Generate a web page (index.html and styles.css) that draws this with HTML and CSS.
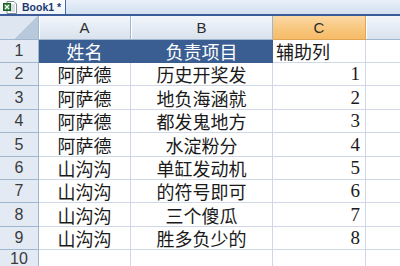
FILE: index.html
```html
<!DOCTYPE html>
<html lang="zh">
<head>
<meta charset="utf-8">
<link rel="stylesheet" href="styles.css">
</head>
<body>
<div class="tabbar">
  <div class="tab">
    <svg class="xl-icon" width="14" height="13" viewBox="0 0 14 13">
      <path d="M4 0.5h7l2.5 2.5v9.5h-9.5z" fill="#fff" stroke="#7f8c99"/>
      <path d="M6 4h6M6 6h6M6 8h6M6 10h6" stroke="#9fb0c2" stroke-width="0.8"/>
      <rect x="0.5" y="2.5" width="7" height="7" fill="#2f8a3a" stroke="#1f5f27"/>
      <path d="M2 4l4 4M6 4l-4 4" stroke="#fff" stroke-width="1.3"/>
    </svg>
    <span class="tab-title">Book1 *</span>
  </div>
</div>
<div class="sheet">
  <div class="corner"></div>
  <div class="colhead">A</div>
  <div class="colhead">B</div>
  <div class="colhead sel">C</div>
  <div class="colhead last"></div>

  <div class="rowhead">1</div>
  <div class="cell center title">姓名</div>
  <div class="cell center title">负责项目</div>
  <div class="cell left">辅助列</div>
  <div class="cell last"></div>

  <div class="rowhead">2</div>
  <div class="cell center">阿萨德</div>
  <div class="cell center">历史开奖发</div>
  <div class="cell num">1</div>
  <div class="cell last"></div>

  <div class="rowhead">3</div>
  <div class="cell center">阿萨德</div>
  <div class="cell center">地负海涵就</div>
  <div class="cell num">2</div>
  <div class="cell last"></div>

  <div class="rowhead">4</div>
  <div class="cell center">阿萨德</div>
  <div class="cell center">都发鬼地方</div>
  <div class="cell num">3</div>
  <div class="cell last"></div>

  <div class="rowhead">5</div>
  <div class="cell center">阿萨德</div>
  <div class="cell center">水淀粉分</div>
  <div class="cell num">4</div>
  <div class="cell last"></div>

  <div class="rowhead">6</div>
  <div class="cell center">山沟沟</div>
  <div class="cell center">单缸发动机</div>
  <div class="cell num">5</div>
  <div class="cell last"></div>

  <div class="rowhead">7</div>
  <div class="cell center">山沟沟</div>
  <div class="cell center">的符号即可</div>
  <div class="cell num">6</div>
  <div class="cell last"></div>

  <div class="rowhead">8</div>
  <div class="cell center">山沟沟</div>
  <div class="cell center">三个傻瓜</div>
  <div class="cell num">7</div>
  <div class="cell last"></div>

  <div class="rowhead">9</div>
  <div class="cell center">山沟沟</div>
  <div class="cell center">胜多负少的</div>
  <div class="cell num">8</div>
  <div class="cell last"></div>

  <div class="rowhead">10</div>
  <div class="cell"></div>
  <div class="cell"></div>
  <div class="cell"></div>
  <div class="cell last"></div>
</div>
</body>
</html>
```
FILE: styles.css
```css
html, body {
  margin: 0;
  padding: 0;
  width: 400px;
  height: 266px;
  overflow: hidden;
  background: #fff;
}

.tabbar {
  height: 14px;
  background: linear-gradient(#e9f0f9, #d3e0f0);
  border-bottom: 2px solid #3b5c99;
  display: flex;
  align-items: stretch;
}

.tab {
  width: 66px;
  box-sizing: border-box;
  background: linear-gradient(#ffffff, #eef3fa);
  border-right: 1px solid #4a6aa5;
  display: flex;
  align-items: center;
  gap: 5px;
  padding-left: 3px;
}

.xl-icon {
  flex: none;
}

.tab-title {
  font-family: "Liberation Sans", Arial, sans-serif;
  font-weight: bold;
  font-size: 10.5px;
  line-height: 12px;
  color: #1c3a70;
  white-space: pre;
}

.sheet {
  display: grid;
  grid-template-columns: 39px 92px 142px 93px 1fr;
  grid-template-rows: 24px 23px 23px 24px 23px 24px 23px 23px 24px 23px 1fr;
  height: 250px;
}

.corner {
  box-sizing: border-box;
  border-right: 1px solid #9eb6ce;
  border-bottom: 1px solid #9eb6ce;
  background-color: #dde6f1;
  background-image: linear-gradient(135deg, transparent 62%, #b9c9dc 62%);
}

.colhead {
  box-sizing: border-box;
  background: linear-gradient(#f3f6fb, #e4ebf4 55%, #d9e2ed);
  border-right: 1px solid #9eb6ce;
  border-bottom: 1px solid #9eb6ce;
  box-shadow: inset 1px 0 0 #ffffff;
  display: flex;
  align-items: center;
  justify-content: center;
  font-family: "Liberation Sans", Arial, sans-serif;
  font-size: 15px;
  line-height: 18px;
  color: #2d2d2d;
  padding-top: 1px;
}

.colhead.sel {
  background: linear-gradient(#fbd9a6, #f8c77d 55%, #f6bb68);
  border-right: 1px solid #e0a552;
  border-bottom: 1px solid #e0a552;
  box-shadow: none;
}

.colhead.last {
  border-right: none;
}

.rowhead {
  box-sizing: border-box;
  background: #e3eaf4;
  border-right: 1px solid #9eb6ce;
  border-bottom: 1px solid #9eb6ce;
  display: flex;
  align-items: flex-end;
  justify-content: center;
  padding-bottom: 2px;
  font-family: "Liberation Sans", Arial, sans-serif;
  font-size: 16px;
  line-height: 18px;
  color: #3a3a3a;
}

.cell {
  box-sizing: border-box;
  border-right: 1px solid #d0d7e5;
  border-bottom: 1px solid #d0d7e5;
  display: flex;
  align-items: flex-end;
  font-family: "Noto Sans CJK SC", "Noto Sans CJK JP", sans-serif;
  font-size: 18px;
  line-height: 22px;
  color: #1a1a1a;
  white-space: nowrap;
}

.cell.center {
  justify-content: center;
}

.cell.left {
  justify-content: flex-start;
  padding-left: 3px;
}

.cell.num {
  justify-content: flex-end;
  padding-right: 5px;
  font-family: "Liberation Serif", "Times New Roman", serif;
  font-size: 19px;
}

.cell.title {
  background: #3a5e91;
  color: #ffffff;
  border-right-color: #3a5e91;
  border-bottom-color: #3a5e91;
}

.cell.last {
  border-right: none;
}
```
